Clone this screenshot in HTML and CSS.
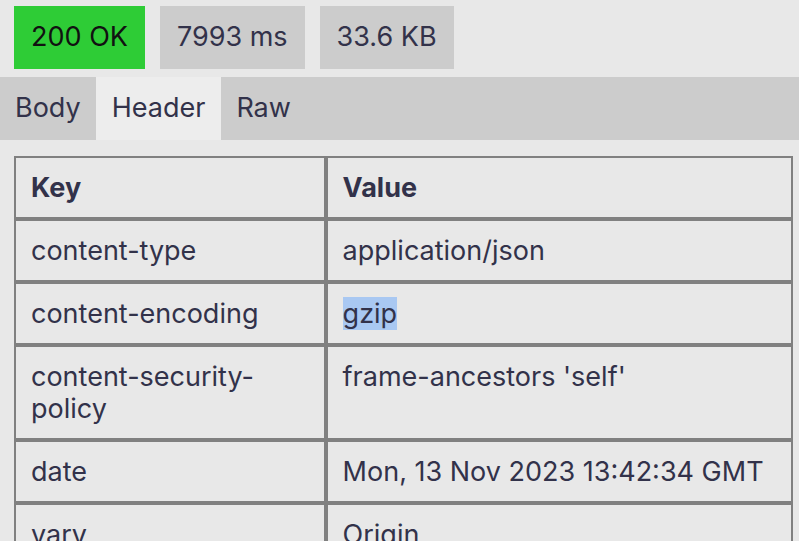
FILE: index.html
```html
<!DOCTYPE html>
<html>

<head>
    <title>Response</title>
    <meta charset=utf-8>
    <meta name=viewport content="width=device-width, initial-scale=1">

    <link rel="stylesheet" href="styles.css">
</head>

<body>
    <div id="status">
        <div class="badge ok">200 OK</div>
        <div class="badge">7993 ms</div>
        <div class="badge">33.6 KB</div>
    </div>
    <div id="tabs">
        <div class="tab">Body</div>
        <div class="tab active">Header</div>
        <div class="tab">Raw</div>
    </div>
    <table id="headers">
        <tr>
            <th class="key">Key</th>
            <th>Value</th>
        </tr>
        <tr>
            <td>content-type</td>
            <td>application/json</td>
        </tr>
        <tr>
            <td>content-encoding</td>
            <td><span class="sel">gzip</span></td>
        </tr>
        <tr>
            <td>content-security-policy</td>
            <td>frame-ancestors 'self'</td>
        </tr>
        <tr>
            <td>date</td>
            <td>Mon, 13 Nov 2023 13:42:34 GMT</td>
        </tr>
        <tr>
            <td>vary</td>
            <td>Origin</td>
        </tr>
    </table>
</body>

</html>
```

FILE: styles.css
```css
body {
    margin: 0;
    font-family: Inter, "Noto Sans", sans-serif;
    font-size: 27px;
    line-height: 32px;
    color: #32324a;
    background: #e8e8e8;
    overflow: hidden;
}

#status {
    display: flex;
    gap: 15px;
    padding: 6px 0 8px 14px;
}

.badge {
    background: #cccccc;
    padding: 15px 17px 16px;
}

.ok {
    background: #2ecc36;
    color: #111111;
}

#tabs {
    background: #cccccc;
    display: flex;
}

.tab {
    padding: 15px 15px 16px;
}

.active {
    background: #ededed;
    padding: 15px 16px 16px;
}

#headers {
    margin: 16px 6px 0 14px;
    width: 779px;
    border-collapse: separate;
    border-spacing: 0;
    text-align: left;
}

th, td {
    border: 2px solid #808080;
    padding: 14px 15px 13px;
    vertical-align: top;
}

th {
    font-weight: 700;
}

.key {
    width: 40%;
}

.sel {
    background: #a9c8f2;
}
```
